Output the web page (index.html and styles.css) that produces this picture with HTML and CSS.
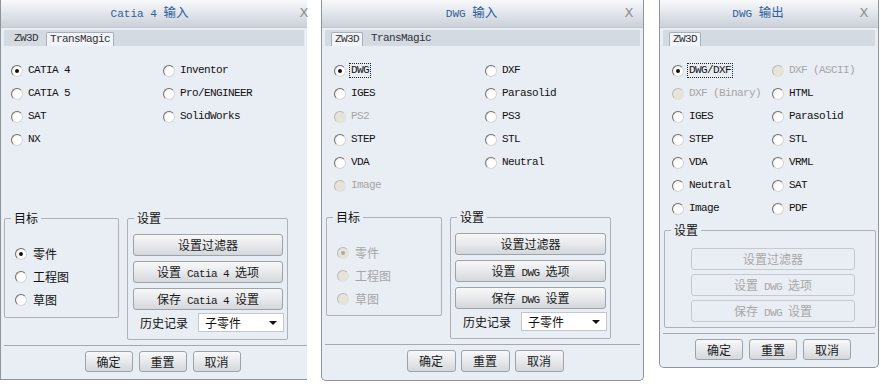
FILE: index.html
```html
<!DOCTYPE html>
<html lang="zh-CN">
<head>
<meta charset="utf-8">
<title>导入导出对话框</title>
<link rel="stylesheet" href="styles.css">
</head>
<body>
<main class="desk">

  <section class="dlg d1">
    <header class="title"><span class="ttl">Catia 4 <span class="c">输入</span></span><span class="close">X</span></header>
    <nav class="tabs"><span class="tab">ZW3D</span><span class="tab on">TransMagic</span></nav>
    <div class="opts">
      <div class="opt"><span class="radio on"></span><span>CATIA 4</span></div>
      <div class="opt"><span class="radio"></span><span>Inventor</span></div>
      <div class="opt"><span class="radio"></span><span>CATIA 5</span></div>
      <div class="opt"><span class="radio"></span><span>Pro/ENGINEER</span></div>
      <div class="opt"><span class="radio"></span><span>SAT</span></div>
      <div class="opt"><span class="radio"></span><span>SolidWorks</span></div>
      <div class="opt"><span class="radio"></span><span>NX</span></div>
    </div>
    <div class="groups">
      <div class="grp tgt">
        <div class="cap c">目标</div>
        <div class="glist">
          <div class="opt"><span class="radio on"></span><span class="c">零件</span></div>
          <div class="opt"><span class="radio"></span><span class="c">工程图</span></div>
          <div class="opt"><span class="radio"></span><span class="c">草图</span></div>
        </div>
      </div>
      <div class="grp set">
        <div class="cap c">设置</div>
        <div class="btns">
          <span class="btn"><span class="c">设置过滤器</span></span>
          <span class="btn"><span class="c">设置</span> Catia 4 <span class="c">选项</span></span>
          <span class="btn"><span class="c">保存</span> Catia 4 <span class="c">设置</span></span>
        </div>
        <div class="hist"><span class="c">历史记录</span><span class="combo"><span class="c">子零件</span><span class="arrow"></span></span></div>
      </div>
    </div>
    <footer class="foot">
      <span class="btn fb"><span class="c">确定</span></span>
      <span class="btn fb"><span class="c">重置</span></span>
      <span class="btn fb"><span class="c">取消</span></span>
    </footer>
  </section>

  <section class="dlg d2">
    <header class="title"><span class="ttl">DWG <span class="c">输入</span></span><span class="close">X</span></header>
    <nav class="tabs"><span class="tab on">ZW3D</span><span class="tab">TransMagic</span></nav>
    <div class="opts">
      <div class="opt"><span class="radio on"></span><span class="focus">DWG</span></div>
      <div class="opt"><span class="radio"></span><span>DXF</span></div>
      <div class="opt"><span class="radio"></span><span>IGES</span></div>
      <div class="opt"><span class="radio"></span><span>Parasolid</span></div>
      <div class="opt"><span class="radio dis"></span><span class="dim">PS2</span></div>
      <div class="opt"><span class="radio"></span><span>PS3</span></div>
      <div class="opt"><span class="radio"></span><span>STEP</span></div>
      <div class="opt"><span class="radio"></span><span>STL</span></div>
      <div class="opt"><span class="radio"></span><span>VDA</span></div>
      <div class="opt"><span class="radio"></span><span>Neutral</span></div>
      <div class="opt"><span class="radio dis"></span><span class="dim">Image</span></div>
    </div>
    <div class="groups">
      <div class="grp tgt">
        <div class="cap c">目标</div>
        <div class="glist">
          <div class="opt"><span class="radio dis on"></span><span class="c dim">零件</span></div>
          <div class="opt"><span class="radio dis"></span><span class="c dim">工程图</span></div>
          <div class="opt"><span class="radio dis"></span><span class="c dim">草图</span></div>
        </div>
      </div>
      <div class="grp set">
        <div class="cap c">设置</div>
        <div class="btns">
          <span class="btn"><span class="c">设置过滤器</span></span>
          <span class="btn"><span class="c">设置</span> DWG <span class="c">选项</span></span>
          <span class="btn"><span class="c">保存</span> DWG <span class="c">设置</span></span>
        </div>
        <div class="hist"><span class="c">历史记录</span><span class="combo"><span class="c">子零件</span><span class="arrow"></span></span></div>
      </div>
    </div>
    <footer class="foot">
      <span class="btn fb"><span class="c">确定</span></span>
      <span class="btn fb"><span class="c">重置</span></span>
      <span class="btn fb"><span class="c">取消</span></span>
    </footer>
  </section>

  <section class="dlg d3">
    <header class="title"><span class="ttl">DWG <span class="c">输出</span></span><span class="close">X</span></header>
    <nav class="tabs"><span class="tab on">ZW3D</span></nav>
    <div class="opts">
      <div class="opt"><span class="radio on"></span><span class="focus">DWG/DXF</span></div>
      <div class="opt"><span class="radio dis"></span><span class="dim">DXF (ASCII)</span></div>
      <div class="opt"><span class="radio dis"></span><span class="dim">DXF (Binary)</span></div>
      <div class="opt"><span class="radio"></span><span>HTML</span></div>
      <div class="opt"><span class="radio"></span><span>IGES</span></div>
      <div class="opt"><span class="radio"></span><span>Parasolid</span></div>
      <div class="opt"><span class="radio"></span><span>STEP</span></div>
      <div class="opt"><span class="radio"></span><span>STL</span></div>
      <div class="opt"><span class="radio"></span><span>VDA</span></div>
      <div class="opt"><span class="radio"></span><span>VRML</span></div>
      <div class="opt"><span class="radio"></span><span>Neutral</span></div>
      <div class="opt"><span class="radio"></span><span>SAT</span></div>
      <div class="opt"><span class="radio"></span><span>Image</span></div>
      <div class="opt"><span class="radio"></span><span>PDF</span></div>
    </div>
    <div class="groups">
      <div class="grp set">
        <div class="cap c">设置</div>
        <div class="btns">
          <span class="btn off"><span class="c">设置过滤器</span></span>
          <span class="btn off"><span class="c">设置</span> DWG <span class="c">选项</span></span>
          <span class="btn off"><span class="c">保存</span> DWG <span class="c">设置</span></span>
        </div>
      </div>
    </div>
    <footer class="foot">
      <span class="btn fb"><span class="c">确定</span></span>
      <span class="btn fb"><span class="c">重置</span></span>
      <span class="btn fb"><span class="c">取消</span></span>
    </footer>
  </section>

</main>
</body>
</html>
```

FILE: styles.css
```css
* { box-sizing: border-box; }

html, body { margin: 0; padding: 0; background: #ffffff; }

body {
  font: 11px/1 "Liberation Mono", "Noto Sans CJK SC", monospace;
  letter-spacing: -0.6px;
  color: #111111;
}

.c {
  font-family: "Noto Sans CJK SC", "Liberation Sans", sans-serif;
  font-size: 12px;
  letter-spacing: 0;
}

.desk {
  display: flex;
  align-items: flex-start;
  width: 881px;
  height: 388px;
  overflow: hidden;
}

/* dialog frame */
.dlg {
  flex: none;
  display: flex;
  flex-direction: column;
  background: #e9edf4;
  border: 1px solid #8e949c;
  border-top: 0;
  border-radius: 0 0 5px 5px;
}
.d1 { width: 307px; height: 380px; border-right: 0; border-radius: 0; }
.d2 { width: 323px; height: 381px; margin-left: 14px; }
.d3 { width: 220px; height: 368px; margin-left: 15px; }

/* title bar */
.title {
  flex: none;
  height: 28px;
  display: flex;
  align-items: center;
  padding-bottom: 2px;
  background: linear-gradient(#f8f9fb, #e6e9ee 40%, #cbd1da);
  border-bottom: 1px solid #c2c8d0;
}
.ttl {
  flex: 1;
  text-align: center;
  color: #2f5f9c;
  letter-spacing: 0;
}
.ttl .c { font-size: 12.5px; color: #2f5f9c; }
.close {
  width: 16px;
  margin-right: 6px;
  font: 13px "DejaVu Sans", sans-serif;
  color: #8f8f8f;
  letter-spacing: 0;
  text-align: center;
}
.d1 .close { width: 12px; margin-right: -3px; }

/* tabs */
.tabs {
  flex: none;
  display: flex;
  align-items: flex-end;
  height: 16px;
  margin: 2px 3px 0;
  padding-left: 6px;
  background: #d4dae2;
}
.tab {
  height: 14px;
  line-height: 13px;
  padding: 0 4px;
  margin-right: 4px;
  color: #333333;
}
.tab.on {
  background: #f1f4f8;
  border: 1px solid #a7afba;
  border-bottom: 0;
  border-radius: 2px 2px 0 0;
  padding: 0 3px;
}

/* radio options */
.opts {
  flex: none;
  display: grid;
  grid-auto-rows: 23px;
  margin-top: 13px;
}
.d1 .opts { grid-template-columns: 152px 1fr; padding-left: 10px; }
.d2 .opts { grid-template-columns: 151px 1fr; padding-left: 12px; }
.d3 .opts { grid-template-columns: 100px 1fr; padding-left: 12px; }

.opt {
  display: flex;
  align-items: center;
  gap: 5px;
  white-space: pre;
}
.radio {
  flex: none;
  width: 12px;
  height: 12px;
  border-radius: 50%;
  border: 1px solid;
  border-color: #6e6e6e #d6d6d6 #d6d6d6 #6e6e6e;
  background: radial-gradient(circle at 62% 62%, #ffffff 45%, #e2e2e2 100%);
  display: flex;
  align-items: center;
  justify-content: center;
}
.radio.on::after {
  content: "";
  width: 4px;
  height: 4px;
  border-radius: 50%;
  background: #111111;
}
.radio.dis {
  background: #e6e3d7;
  border-color: #b9b9b9 #e0e0e0 #e0e0e0 #b9b9b9;
}
.radio.dis.on::after { background: #a8a8a8; }
.dim { color: #a6a6a6; }
.focus { outline: 1px dotted #222222; outline-offset: 1px; }

/* groups */
.groups { flex: none; display: flex; align-items: flex-start; }
.d1 .groups { margin-top: 67px; }
.d2 .groups { margin-top: 20px; }
.d3 .groups { margin-top: 10px; }

.grp {
  flex: none;
  border: 1px solid #aeb2b8;
  border-radius: 2px;
}
.cap {
  display: table;
  margin: -7px 0 0 6px;
  padding: 0 3px;
  line-height: 12px;
  background: #e9edf4;
  color: #111111;
}
.glist { padding: 18px 0 0 10px; }
.glist .opt { height: 23px; gap: 6px; }

.d1 .tgt { margin-left: 3px; width: 115px; height: 100px; }
.d1 .set { margin-left: 8px; width: 161px; height: 122px; }
.d2 .tgt { margin-left: 4px; width: 116px; height: 99px; }
.d2 .set { margin-left: 8px; width: 161px; height: 122px; }
.d3 .set { margin-left: 4px; width: 212px; height: 98px; }

.btns {
  display: flex;
  flex-direction: column;
  gap: 5px;
  margin-top: 10px;
}
.d1 .btns { padding: 0 4px 0 5px; }
.d2 .btns { padding: 0 4px; }
.d3 .btns { padding: 0 20px 0 26px; margin-top: 12px; gap: 4px; }

.btn {
  display: block;
  height: 22px;
  line-height: 20px;
  text-align: center;
  border: 1px solid #9ea3aa;
  border-radius: 3px;
  background: linear-gradient(#f8f8f9, #e7e9ec 50%, #d4d7db);
  color: #1a1a1a;
  white-space: pre;
}
.btn.off {
  background: none;
  border-color: #c6cad0;
  color: #a8a8a8;
}

.hist {
  display: flex;
  align-items: center;
  gap: 10px;
  margin-top: 3px;
  padding-left: 12px;
}
.combo {
  display: flex;
  align-items: center;
  justify-content: space-between;
  width: 86px;
  height: 19px;
  padding: 0 6px;
  background: #ffffff;
  border: 1px solid #c4c8ce;
}
.arrow {
  width: 0;
  height: 0;
  border-left: 4px solid transparent;
  border-right: 4px solid transparent;
  border-top: 4px solid #111111;
}

/* footer */
.foot {
  flex: none;
  margin: auto 3px 0;
  border-top: 1px solid #a4a9b0;
  display: flex;
  justify-content: center;
  gap: 6px;
  padding: 5px 0 7px;
}
.fb { width: 48px; height: 21px; line-height: 19px; }
.d1 .foot { padding-left: 14px; margin-right: 0; }
.d2 .foot { padding-left: 5px; gap: 5px; padding-bottom: 8px; }
.d2 .fb { width: 49px; height: 22px; line-height: 20px; }
.d3 .foot { padding-left: 8px; }
```
